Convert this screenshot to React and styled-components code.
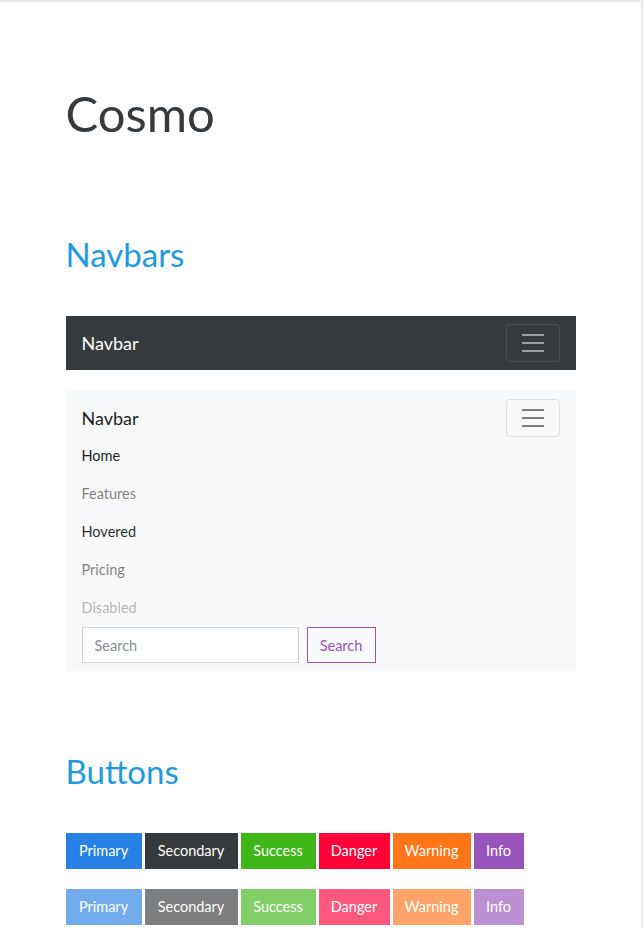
import React from "react";
import styled, { createGlobalStyle } from "styled-components";

const GlobalStyle = createGlobalStyle`
    html, body {
        margin: 0;
        padding: 0;
    }
    body {
        min-height: 100vh;
        box-sizing: border-box;
        border-top: 2px solid #e8e8e8;
        border-right: 2px solid #e8e8e8;
        background: #fff;
        font-family: Lato, "Noto Sans", sans-serif;
        color: #373a3c;
    }
`

const Container = styled.div`
    max-width: 510px;
    margin: 0 auto;
    padding: 0 15px;
`

const PageTitle = styled.h1`
    margin: 82px 0 0;
    font-size: 49px;
    font-weight: 400;
    line-height: 1.2;
    color: #373a3c;
`

const SectionTitle = styled.h2`
    margin: ${p => p.$top}px 0 0;
    font-size: 33px;
    font-weight: 400;
    line-height: 1.2;
    color: #1f9ae0;
`

const Navbar = styled.nav`
    display: flex;
    flex-wrap: wrap;
    align-items: center;
    justify-content: space-between;
    margin-top: ${p => p.$top}px;
    padding: ${p => (p.$dark ? "8px" : "9px")} 16px 8px;
    background: ${p => (p.$dark ? "#373a3c" : "#f8f9fa")};
`

const Brand = styled.span`
    font-size: 18px;
    line-height: 38px;
    color: ${p => (p.$dark ? "#fff" : "rgba(0, 0, 0, 0.9)")};
`

const Toggler = styled.button`
    box-sizing: border-box;
    width: 54px;
    height: 38px;
    padding: 0;
    display: flex;
    align-items: center;
    justify-content: center;
    background: transparent;
    border: 1px solid ${p => (p.$dark ? "rgba(255, 255, 255, 0.1)" : "rgba(0, 0, 0, 0.1)")};
    border-radius: 4px;
    color: ${p => (p.$dark ? "rgba(255, 255, 255, 0.5)" : "rgba(0, 0, 0, 0.5)")};
`

const NavList = styled.ul`
    flex-basis: 100%;
    list-style: none;
    margin: 0;
    padding: 0;
    display: flex;
    flex-direction: column;
`

const NavItem = styled.li`
    font-size: 14.5px;
    line-height: 38px;
    color: ${p => p.$color};
`

const SearchForm = styled.form`
    flex-basis: 100%;
    display: flex;
    gap: 8px;
`

const SearchInput = styled.input`
    box-sizing: border-box;
    width: 217px;
    height: 36px;
    padding: 0 12px;
    border: 1px solid #ced4da;
    border-radius: 0;
    background: #fff;
    font-family: Lato, "Noto Sans", sans-serif;
    font-size: 14.5px;
    color: #495057;
    &::placeholder {
        color: #868e96;
    }
`

const OutlineButton = styled.button`
    box-sizing: border-box;
    width: 69px;
    height: 36px;
    padding: 0;
    border: 1px solid #9954bb;
    background: transparent;
    color: #9954bb;
    font-family: Lato, "Noto Sans", sans-serif;
    font-size: 14.5px;
`

const ButtonRow = styled.div`
    display: flex;
    gap: 3px;
    margin-top: ${p => p.$top}px;
`

const Button = styled.button`
    box-sizing: border-box;
    width: ${p => p.$w}px;
    height: 36px;
    padding: 0;
    border: 0;
    border-radius: 0;
    background: ${p => p.$bg};
    color: #fff;
    font-family: Lato, "Noto Sans", sans-serif;
    font-size: 14.5px;
    opacity: ${p => (p.$disabled ? 0.65 : 1)};
`

const TogglerIcon = () => (
    <svg width="30" height="30" viewBox="0 0 30 30" fill="none">
        <path d="M4 7h22M4 15h22M4 23h22" stroke="currentColor" strokeWidth="2" />
    </svg>
)

const links = [
    { label: "Home", color: "rgba(0, 0, 0, 0.9)" },
    { label: "Features", color: "rgba(0, 0, 0, 0.5)" },
    { label: "Hovered", color: "rgba(0, 0, 0, 0.85)" },
    { label: "Pricing", color: "rgba(0, 0, 0, 0.5)" },
    { label: "Disabled", color: "rgba(0, 0, 0, 0.3)" },
]

const buttons = [
    { label: "Primary", bg: "#2780e3", w: 76 },
    { label: "Secondary", bg: "#373a3c", w: 93 },
    { label: "Success", bg: "#3fb618", w: 75 },
    { label: "Danger", bg: "#ff0039", w: 71 },
    { label: "Warning", bg: "#ff7518", w: 78 },
    { label: "Info", bg: "#9954bb", w: 50 },
]

export default function App() {
    return (
        <>
            <GlobalStyle />
            <Container>
                <PageTitle>Cosmo</PageTitle>

                <SectionTitle $top={92}>Navbars</SectionTitle>

                <Navbar $dark $top={42}>
                    <Brand $dark>Navbar</Brand>
                    <Toggler $dark><TogglerIcon /></Toggler>
                </Navbar>

                <Navbar $top={20}>
                    <Brand>Navbar</Brand>
                    <Toggler><TogglerIcon /></Toggler>
                    <NavList>
                        {links.map(l => (
                            <NavItem key={l.label} $color={l.color}>{l.label}</NavItem>
                        ))}
                    </NavList>
                    <SearchForm onSubmit={e => e.preventDefault()}>
                        <SearchInput placeholder="Search" />
                        <OutlineButton type="submit">Search</OutlineButton>
                    </SearchForm>
                </Navbar>

                <SectionTitle $top={81}>Buttons</SectionTitle>

                <ButtonRow $top={41}>
                    {buttons.map(b => (
                        <Button key={b.label} $bg={b.bg} $w={b.w}>{b.label}</Button>
                    ))}
                </ButtonRow>
                <ButtonRow $top={20}>
                    {buttons.map(b => (
                        <Button key={b.label} $bg={b.bg} $w={b.w} $disabled>{b.label}</Button>
                    ))}
                </ButtonRow>
            </Container>
        </>
    );
}
